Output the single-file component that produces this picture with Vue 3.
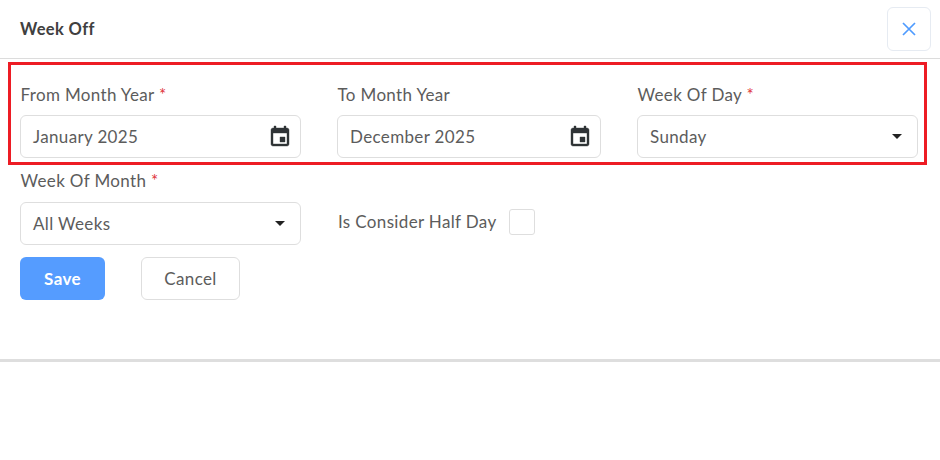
<template>
  <div class="dialog">
    <header class="dialog-head">
      <h2 class="dialog-title">Week Off</h2>
      <button class="close-btn" type="button" aria-label="Close">
        <svg width="16" height="16" viewBox="0 0 16 16">
          <path d="M2 2 14 14M14 2 2 14" stroke="#4f9bff" stroke-width="1.7" fill="none" />
        </svg>
      </button>
    </header>

    <section class="highlight">
      <div class="field">
        <label class="field-label">From Month Year <span class="req">*</span></label>
        <div class="input-box">
          <span>January 2025</span>
          <svg class="cal" width="24" height="24" viewBox="0 0 24 24">
            <path :d="calendarPath" fill="#2f3336" stroke="#2f3336" stroke-width="0.4" />
          </svg>
        </div>
      </div>
      <div class="field">
        <label class="field-label">To Month Year</label>
        <div class="input-box">
          <span>December 2025</span>
          <svg class="cal" width="24" height="24" viewBox="0 0 24 24">
            <path :d="calendarPath" fill="#2f3336" stroke="#2f3336" stroke-width="0.4" />
          </svg>
        </div>
      </div>
      <div class="field">
        <label class="field-label">Week Of Day <span class="req">*</span></label>
        <div class="input-box">
          <span>Sunday</span>
          <i class="caret"></i>
        </div>
      </div>
    </section>

    <section class="second-row">
      <div class="field">
        <label class="field-label">Week Of Month <span class="req">*</span></label>
        <div class="input-box">
          <span>All Weeks</span>
          <i class="caret"></i>
        </div>
      </div>
      <div class="check-field">
        <span class="check-label">Is Consider Half Day</span>
        <span class="check-box"></span>
      </div>
    </section>

    <div class="actions">
      <button class="btn btn-save" type="button">Save</button>
      <button class="btn btn-cancel" type="button">Cancel</button>
    </div>
  </div>
</template>

<script setup>
// material "event" icon
const calendarPath = 'M17 12h-5v5h5v-5zM16 1v2H8V1H6v2H5c-1.11 0-1.99.9-1.99 2L3 19c0 1.1.89 2 2 2h14c1.1 0 2-.9 2-2V5c0-1.1-.9-2-2-2h-1V1h-2zm3 18H5V8h14v11z'
</script>

<style>
body {
  background: #fff;
}
</style>

<style scoped>
.dialog {
  width: 940px;
  height: 362px;
  box-sizing: border-box;
  border-bottom: 3px solid #dedede;
  font-family: "Lato", "Noto Sans", sans-serif;
  color: #5a5a5a;
  background: #fff;
  letter-spacing: 0.35px;
}

.dialog-head {
  height: 59px;
  box-sizing: border-box;
  border-bottom: 1px solid #dcdcdc;
  display: flex;
  align-items: center;
  justify-content: space-between;
  padding: 0 9px 1px 20px;
}
.dialog-title {
  margin: 0;
  font-size: 16.5px;
  font-weight: 700;
  color: #404040;
}
.close-btn {
  width: 44px;
  height: 44px;
  display: flex;
  align-items: center;
  justify-content: center;
  padding: 0;
  background: #fff;
  border: 1px solid #e6ebf2;
  border-radius: 6px;
}

.highlight {
  margin: 3px 0 0 8px;
  width: 919px;
  height: 103px;
  box-sizing: border-box;
  border: 3px solid #ed1c24;
  padding: 0 0 0 9px;
  display: grid;
  grid-template-columns: 281px 264px 281px;
  column-gap: 36px;
}
.highlight .field {
  padding-top: 19px;
}
.highlight .field-label {
  margin-bottom: 10px;
}

.field-label {
  display: block;
  height: 21px;
  line-height: 21px;
  margin-bottom: 11px;
  padding-left: 0.5px;
  font-size: 17px;
  color: #5c5c5c;
}
.req {
  color: #e0353b;
}

.input-box {
  height: 43px;
  box-sizing: border-box;
  border: 1px solid #dedede;
  border-radius: 6px;
  display: flex;
  align-items: center;
  justify-content: space-between;
  padding: 0 8px 0 12px;
  font-size: 17px;
  color: #5c5c5c;
  background: #fff;
}
.cal {
  flex: none;
}
.caret {
  width: 0;
  height: 0;
  margin-right: 7px;
  border-left: 5px solid transparent;
  border-right: 5px solid transparent;
  border-top: 5px solid #222;
}

.second-row {
  margin: 5px 0 0 20px;
  display: grid;
  grid-template-columns: 281px auto;
  column-gap: 36px;
}
.check-field {
  display: flex;
  align-items: center;
  gap: 12px;
  padding: 30px 0 0 1px;
  height: 43px;
}
.check-label {
  font-size: 17px;
  color: #5c5c5c;
}
.check-box {
  width: 26px;
  height: 26px;
  box-sizing: border-box;
  border: 1px solid #dedede;
  border-radius: 3px;
}

.actions {
  margin: 12px 0 0 20px;
  display: flex;
  gap: 36px;
}
.btn {
  height: 43px;
  border-radius: 6px;
  font-family: inherit;
  font-size: 17px;
  letter-spacing: 0.35px;
  padding: 0;
}
.btn-save {
  width: 85px;
  border: none;
  background: #559cff;
  color: #fff;
  font-weight: 700;
}
.btn-cancel {
  width: 99px;
  border: 1px solid #dedede;
  background: #fff;
  color: #5c5c5c;
}
</style>
